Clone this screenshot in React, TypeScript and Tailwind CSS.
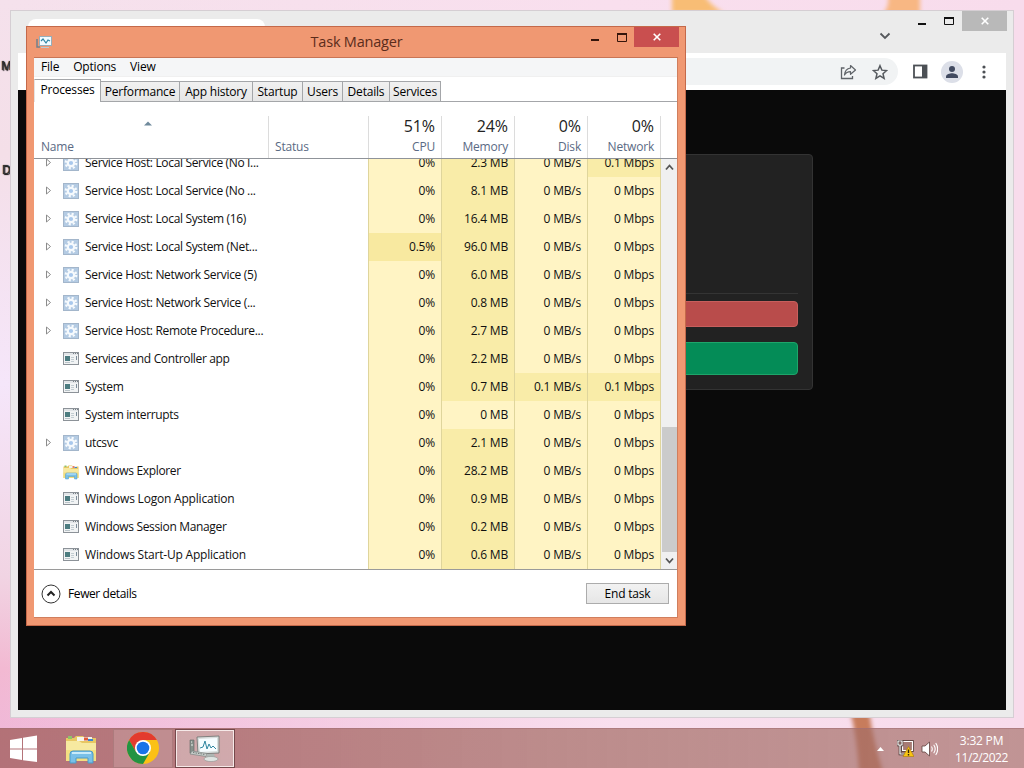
import { ReactNode } from 'react'

type Row = {
  name: string
  icon: 'gear' | 'app' | 'folder'
  expand?: boolean
  wide?: boolean
  cpu?: string
  mem: string
  disk?: string
  net?: string
}

const rows: Row[] = [
  { name: 'Service Host: Local Service (No I...', icon: 'gear', expand: true, mem: '2.3 MB', net: '0.1 Mbps' },
  { name: 'Service Host: Local Service (No ...', icon: 'gear', expand: true, mem: '8.1 MB' },
  { name: 'Service Host: Local System (16)', icon: 'gear', expand: true, mem: '16.4 MB' },
  { name: 'Service Host: Local System (Net...', icon: 'gear', expand: true, cpu: '0.5%', mem: '96.0 MB' },
  { name: 'Service Host: Network Service (5)', icon: 'gear', expand: true, mem: '6.0 MB' },
  { name: 'Service Host: Network Service (...', icon: 'gear', expand: true, mem: '0.8 MB' },
  { name: 'Service Host: Remote Procedure...', icon: 'gear', expand: true, mem: '2.7 MB' },
  { name: 'Services and Controller app', icon: 'app', mem: '2.2 MB' },
  { name: 'System', icon: 'app', mem: '0.7 MB', disk: '0.1 MB/s', net: '0.1 Mbps' },
  { name: 'System interrupts', icon: 'app', mem: '0 MB' },
  { name: 'utcsvc', icon: 'gear', expand: true, mem: '2.1 MB' },
  { name: 'Windows Explorer', icon: 'folder', mem: '28.2 MB' },
  { name: 'Windows Logon Application', icon: 'app', wide: true, mem: '0.9 MB' },
  { name: 'Windows Session Manager', icon: 'app', mem: '0.2 MB' },
  { name: 'Windows Start-Up Application', icon: 'app', wide: true, mem: '0.6 MB' },
]

const tabs = [
  { label: 'Performance', w: 'w-[79px]' },
  { label: 'App history', w: 'w-[73px]' },
  { label: 'Startup', w: 'w-[50px]' },
  { label: 'Users', w: 'w-[40px]' },
  { label: 'Details', w: 'w-[47px]' },
  { label: 'Services', w: 'w-[51px]' },
]

const totals = [
  { value: '51%', label: 'CPU' },
  { value: '24%', label: 'Memory' },
  { value: '0%', label: 'Disk' },
  { value: '0%', label: 'Network' },
]

function GearIcon() {
  return (
    <svg width="16" height="16" viewBox="0 0 16 16">
      <rect width="16" height="16" fill="#b4cbe3" />
      <rect x=".5" y=".5" width="15" height="15" fill="none" stroke="#a3b6cb" />
      <circle cx="8" cy="8" r="5.2" fill="none" stroke="#f6fafd" strokeWidth="2.4" strokeDasharray="2.1 1.98" />
      <circle cx="8" cy="8" r="3.2" fill="#a9c8ec" stroke="#f6fafd" strokeWidth="2.2" />
    </svg>
  )
}

function AppIcon() {
  return (
    <svg width="16" height="13" viewBox="0 0 16 13">
      <rect x=".5" y=".5" width="15" height="12" fill="#f1f3f4" stroke="#8c9298" />
      <path d="M1 2h14" stroke="#d3d8dc" strokeWidth="1" />
      <path d="M10 1.5h1m1 0h1m1 0h1" stroke="#777f86" />
      <rect x="2" y="4" width="5" height="5" fill="#4c7c80" />
      <path d="M8 5.5h3M8 7.5h3M8 9.5h3" stroke="#c3cdd2" />
      <path d="M13.500 4v4" stroke="#7b8c99" />
      <path d="M2 10.500h5" stroke="#b9c3c8" />
    </svg>
  )
}

function FolderIcon({ size }: { size: number }) {
  return (
    <svg width={size} height={size} viewBox="0 0 32 32">
      <path d="M1 5h8l2-2h7l2 2h11v23H1z" fill="#e8c763" />
      <path d="M3 3h4v3H3z" fill="#8fc36a" />
      <path d="M12 4h15v4H12z" fill="#f5f3e8" />
      <path d="M19 4.5h4v3h-4z" fill="#e05a3a" />
      <path d="M23 6h5v2h-5z" fill="#3b87d0" />
      <path d="M1 8h13l3 2h14v18H1z" fill="#f7e9a0" />
      <path d="M1 17h30v11H1z" fill="#f1d873" opacity=".7" />
      <path d="M5 30V21q0-3 3-3h17q3 0 3 3v9h-5v-5H11v5z" fill="#79c0e8" stroke="#4a9bc9" />
      <path d="M7 20h19" stroke="#c8ebfa" strokeWidth="2" />
    </svg>
  )
}

function TaskMgrIcon() {
  return (
    <svg width="16" height="14" viewBox="0 0 16 14">
      <path d="M1 4v8h3" fill="none" stroke="#71808c" strokeWidth="1.5" />
      <rect x="3.5" y="1.5" width="12" height="9" fill="#f2fbff" stroke="#96aebb" />
      <path d="M5 6l2-2 3 4 2-3 2 1" fill="none" stroke="#3187a6" strokeWidth="1.2" />
      <path d="M5 12.5h8" stroke="#bccbd3" />
    </svg>
  )
}

function TaskMgrLarge() {
  return (
    <svg width="32" height="30" viewBox="0 0 32 30">
      <path d="M1 6h4v13H1z" fill="#88918c" stroke="#5f6662" strokeWidth=".6" />
      <path d="M2 8h1M2 11h2" stroke="#e8efe9" />
      <path d="M8 3l22-1v17l-21 1z" fill="#d9dedd" stroke="#69706d" strokeWidth=".8" />
      <path d="M10 5l18-1v13l-17 1z" fill="#f6fdff" />
      <path d="M11 14l3-1 2-6 2 8 2-5 2 4 2-2 3 3" fill="none" stroke="#2f86a0" />
      <path d="M3 17l15 2.500-1 3L1 20z" fill="#c9cfcc" stroke="#7d8582" strokeWidth=".7" />
      <path d="M4 18.500l12 2" stroke="#6f7774" strokeDasharray="1.500 1" />
      <path d="M18 20h7l1 3h-9z" fill="#aeb6b3" />
      <ellipse cx="22" cy="25" rx="7" ry="2.500" fill="#dfe4e2" stroke="#8e9592" strokeWidth=".6" />
    </svg>
  )
}

function ChromeIcon() {
  return (
    <svg width="32" height="32" viewBox="0 0 32 32">
      <circle cx="16" cy="16" r="16" fill="#fbc116" />
      <path d="M16 8h13.86A16 16 0 0 0 2.14 8L9 20z" fill="#e33b2e" />
      <path d="M2.14 8A16 16 0 0 0 16 32l6.93-12L16 16 9.07 20z" fill="#229342" />
      <circle cx="16" cy="16" r="8" fill="#fff" />
      <circle cx="16" cy="16" r="6.3" fill="#1a73e8" />
    </svg>
  )
}

function Heat({ children, shade }: { children: ReactNode; shade: 'low' | 'mid' | 'top' }) {
  const color = shade === 'low' ? 'bg-[#fff4c4]' : shade === 'mid' ? 'bg-[#f9eca8]' : 'bg-[#f8e9a0]'
  return (
    <div className={`${color} flex w-[73px] items-center justify-end border-r border-[#dfd59c] pr-[6px]`}>
      {children}
    </div>
  )
}

function ProcessRow({ row }: { row: Row }) {
  return (
    <div className="flex h-7 shrink-0">
      <div className="flex w-[334px] items-center pl-[11px]">
        <div className="w-[18px]">
          {row.expand && (
            <svg className="mb-px" width="7" height="9" viewBox="0 0 7 9">
              <path d="M1.5 1v7L5.5 4.5z" fill="none" stroke="#8c8c8c" />
            </svg>
          )}
        </div>
        <div className="w-[22px]">
          {row.icon === 'gear' && <GearIcon />}
          {row.icon === 'app' && <div className="pb-[2px]"><AppIcon /></div>}
          {row.icon === 'folder' && <div className="pt-px"><FolderIcon size={16} /></div>}
        </div>
        <span className={`whitespace-pre ${row.wide ? 'tracking-[-0.2px]' : 'tracking-[-0.34px]'}`}>{row.name}</span>
      </div>
      <div className="w-px bg-[#dfd59c]" />
      <Heat shade={row.cpu ? 'top' : 'low'}>{row.cpu ?? '0%'}</Heat>
      <Heat shade={row.mem === '0 MB' ? 'low' : 'mid'}>{row.mem}</Heat>
      <Heat shade={row.disk ? 'mid' : 'low'}>{row.disk ?? '0 MB/s'}</Heat>
      <Heat shade={row.net ? 'mid' : 'low'}>{row.net ?? '0 Mbps'}</Heat>
    </div>
  )
}

function Chevron({ up }: { up?: boolean }) {
  return (
    <svg width="9" height="7" viewBox="0 0 9 7">
      <path d={up ? 'M1 5.5l3.5-4 3.5 4' : 'M1 1.5l3.5 4 3.5-4'} fill="none" stroke="#555" strokeWidth="1.8" />
    </svg>
  )
}

function TaskManager() {
  return (
    <div className="absolute left-[26px] top-[26px] flex h-[600px] w-[660px] flex-col border border-[#c4694a] bg-[#f09872] px-[7px] pb-[7px]">
      <div className="flex h-[30px] shrink-0">
        <div className="flex w-[100px] pl-[2px] pt-[8px]">
          <TaskMgrIcon />
        </div>
        <div className="flex-1 pl-[48px] text-center text-[14.5px] leading-[29px] tracking-[-0.2px] text-[#5b2c1b]">Task Manager</div>
        <div className="mr-[-1px] flex w-[148px] justify-end">
          <svg className="mr-[-7px]" width="60" height="20" viewBox="0 0 60 20">
            <path d="M10 13h8" stroke="#35150b" strokeWidth="2" />
            <path d="M36.500 6.500h9v8h-9z" fill="none" stroke="#35150b" />
            <path d="M36 7h10" stroke="#35150b" strokeWidth="2" />
          </svg>
          <div className="flex h-5 w-[45px] items-center justify-center bg-[#c94f4f]">
            <svg width="8" height="8" viewBox="0 0 8 8">
              <path d="M.7.7l6.6 6.6M7.3.7L.7 7.3" stroke="#fff" strokeWidth="1.6" />
            </svg>
          </div>
        </div>
      </div>

      <div className="flex min-h-0 flex-1 flex-col border border-l-0 border-[#d07e5d] border-t-[#c97555] bg-white">
        <div className="flex h-[19px] shrink-0 gap-[14px] border-b border-[#f0f0f0] bg-[#f5f6f7] pl-[7px] leading-[17px]">
          <span>File</span>
          <span>Options</span>
          <span>View</span>
        </div>

        <div className="flex h-[25px] shrink-0 items-end border-b border-[#a4a6a9] pt-[3px]">
          <div className="mb-[-1px] h-[23px] w-[67px] border border-b-0 border-[#a4a6a9] border-l-[#e4e4e4] bg-white text-center leading-[20px]">Processes</div>
          {tabs.map((t) => (
            <div key={t.label} className={`${t.w} h-[20px] border border-b-0 border-l-0 border-[#a4a6a9] bg-linear-to-b from-[#f1f1f1] to-[#e6e6e6] text-center leading-[20px]`}>
              {t.label}
            </div>
          ))}
        </div>

        <div className="flex h-[57px] shrink-0 border-b border-[#8f9399] pt-[14px] text-[#5a6a84]">
          <div className="flex w-[235px] flex-col border-r border-[#dcdcdc] pl-[7px]">
            <svg className="ml-[103px] mt-[5px]" width="8" height="5" viewBox="0 0 8 5">
              <path d="M0 4.5L4 .5l4 4z" fill="#6f8a9c" />
            </svg>
            <span className="mt-[13px] leading-4">Name</span>
          </div>
          <div className="flex w-[100px] items-end border-r border-[#dcdcdc] pb-[3px] pl-[6px] leading-4">Status</div>
          {totals.map((t) => (
            <div key={t.label} className="flex w-[73px] flex-col items-end border-r border-[#dcdcdc] pr-[6px]">
              <span className="text-[16px] leading-[21px] tracking-[-0.1px] text-[#222]">{t.value}</span>
              <span className="mt-[2px] leading-4">{t.label}</span>
            </div>
          ))}
        </div>

        <div className="flex h-[410px] shrink-0 overflow-hidden">
          <div className="mt-[-10px] flex flex-col text-[#101010]">
            {rows.map((row, i) => (
              <ProcessRow key={i} row={row} />
            ))}
          </div>
          <div className="flex flex-1 flex-col items-center bg-[#f0f0f0]">
            <div className="flex h-[17px] items-center">
              <Chevron up />
            </div>
            <div className="flex-1" />
            <div className="h-[125px] w-[15px] bg-[#cbcbcb]" />
            <div className="flex h-[17px] items-center">
              <Chevron />
            </div>
          </div>
        </div>

        <div className="flex flex-1 items-center border-t border-[#9a9a9a] pl-[7px] pr-[8px]">
          <svg width="20" height="20" viewBox="0 0 20 20">
            <circle cx="10" cy="10" r="9" fill="#fff" stroke="#333" />
            <path d="M6.5 11.5L10 8l3.5 3.5" fill="none" stroke="#222" strokeWidth="2" />
          </svg>
          <span className="ml-[7px] flex-1 tracking-[-0.4px]">Fewer details</span>
          <button className="h-[21px] w-[83px] border border-[#acacac] bg-linear-to-b from-[#f2f2f2] to-[#e6e6e6] leading-[19px]">End task</button>
        </div>
      </div>
    </div>
  )
}

function Browser() {
  return (
    <div className="absolute left-[10px] top-[10px] flex h-[708px] w-[1004px] flex-col border border-[#d5ced3] bg-[#ebebeb] px-[7px] pb-[7px]">
      <div className="flex h-[42px] shrink-0 justify-between">
        <div className="mt-2 ml-[10px] h-[34px] w-[237px] rounded-t-lg bg-white" />
        <div className="flex">
          <svg className="mt-[21px] mr-[19px]" width="12" height="8" viewBox="0 0 12 8">
            <path d="M1.5 1.5L6 6l4.500-4.500" fill="none" stroke="#55585c" strokeWidth="1.8" />
          </svg>
          <svg width="52" height="20" viewBox="0 0 52 20">
            <path d="M8 13h8" stroke="#111" strokeWidth="2" />
            <path d="M34.500 6.500h9v7h-9z" fill="none" stroke="#111" />
            <path d="M34 7h10" stroke="#111" strokeWidth="2" />
          </svg>
          <div className="mr-[-1px] flex h-5 w-[45px] items-center justify-center bg-[#b9b9b9]">
            <svg width="8" height="8" viewBox="0 0 8 8">
              <path d="M.7.7l6.600 6.600M7.300.7L.7 7.300" stroke="#fff" strokeWidth="1.600" />
            </svg>
          </div>
        </div>
      </div>

      <div className="flex h-[37px] shrink-0 items-center bg-white pr-[18px]">
        <div className="ml-[100px] flex h-[27px] flex-1 items-center justify-end gap-[15px] rounded-full bg-[#f1f3f4] pr-[10px]">
          <svg width="17" height="16" viewBox="0 0 17 16">
            <path d="M4.500 4H1.500v10.500h11V12" fill="none" stroke="#5f6368" strokeWidth="1.300" />
            <path d="M10.500 1.500L15.500 6l-5 4.300V7.700C7.500 7.700 5.800 8.700 4.500 11c.3-3.800 2.500-6.500 6-7z" fill="none" stroke="#5f6368" strokeWidth="1.200" strokeLinejoin="round" />
          </svg>
          <svg width="16" height="16" viewBox="0 0 24 24">
            <path d="M12 2.500l2.800 6.700 7.200.6-5.500 4.800 1.700 7.100-6.200-3.800-6.200 3.800 1.700-7.100L2 9.800l7.200-.6z" fill="none" stroke="#55595e" strokeWidth="2.200" />
          </svg>
        </div>
        <svg className="ml-[15px]" width="15" height="15" viewBox="0 0 15 15">
          <rect x="1" y="1.500" width="12.500" height="12" fill="#fff" stroke="#4c5055" strokeWidth="1.800" />
          <path d="M9 1h5v13H9z" fill="#4c5055" />
        </svg>
        <div className="ml-[13px] flex size-[22px] items-center justify-center rounded-full bg-[#dcdfe8]">
          <svg width="14" height="14" viewBox="0 0 14 14">
            <circle cx="7" cy="4" r="3" fill="#414a60" />
            <path d="M1 13v-1.500C1 9.300 5 8.300 7 8.300s6 1 6 3.200V13z" fill="#414a60" />
          </svg>
        </div>
        <svg className="ml-[17px]" width="8" height="14" viewBox="0 0 8 14">
          <circle cx="4" cy="2" r="1.600" fill="#4c5055" />
          <circle cx="4" cy="7" r="1.600" fill="#4c5055" />
          <circle cx="4" cy="12" r="1.600" fill="#4c5055" />
        </svg>
      </div>

      <div className="flex flex-1 justify-end bg-[#0a0a0a] pr-[193px] pt-[64px]">
        <div className="h-[236px] w-[420px] rounded-[4px] border border-[#333] bg-[#222] px-[14px] pt-[138px]">
          <div className="border-t border-[#343434]" />
          <div className="mt-[7px] h-[26px] rounded-[4px] border border-[#c85f5d] bg-[#b94c4b]" />
          <div className="mt-[15px] h-[33px] rounded-[4px] border border-[#1ea56a] bg-[#048c57]" />
        </div>
      </div>
    </div>
  )
}

function Wallpaper() {
  return (
    <svg className="absolute inset-0" width="1024" height="768" viewBox="0 0 1024 768">
      <defs>
        <linearGradient id="pink" x1="0" y1="0" x2="0" y2="1">
          <stop offset="0" stopColor="#f5e1ec" />
          <stop offset=".2" stopColor="#f4dfe8" />
          <stop offset=".5" stopColor="#f5e6fa" />
          <stop offset=".75" stopColor="#f1d4e3" />
          <stop offset=".87" stopColor="#f2b9d2" />
          <stop offset="1" stopColor="#efb8dc" />
        </linearGradient>
        <linearGradient id="fade" x1="0" y1="0" x2="1" y2="0">
          <stop offset="0" stopColor="#f9dfee" stopOpacity="0" />
          <stop offset=".6" stopColor="#f9dfee" />
          <stop offset="1" stopColor="#f8dcec" />
        </linearGradient>
        <filter id="soft">
          <feGaussianBlur stdDeviation="2" />
        </filter>
      </defs>
      <rect width="1024" height="768" fill="url(#pink)" />
      <rect width="1024" height="768" fill="url(#fade)" />
      <g filter="url(#soft)">
        <path d="M672-5h32q6 10 20 18h-52z" fill="#f8bd74" />
        <path d="M888-5h32v20h-38q8-8 6-20z" fill="#f8b783" />
        <path d="M850 710h19q4 30 14 62h-24q-2-34-9-62z" fill="#c77c5c" />
      </g>
    </svg>
  )
}

function Taskbar() {
  return (
    <div className="absolute inset-x-0 bottom-0 flex h-10 items-center border-t border-[#a36f75]/60 bg-linear-to-r from-[#a4605f]/80 via-[#a8706a]/75 to-[#a26d66]/65 text-white">
      <div className="flex w-[50px] pl-[10px]">
        <svg width="28" height="28" viewBox="0 0 28 28">
          <path d="M0 5l12-2v10.500H0zM13 2.800L27 .5v13H13zM0 14.500h12V25L0 23zM13 14.500h14v12.500L13 25.200z" fill="#fff" />
        </svg>
      </div>
      <div className="flex w-[63px] pl-[15px]">
        <FolderIcon size={32} />
      </div>
      <div className="flex h-[39px] w-[60px] items-center justify-center border border-[#d9b5b4] bg-white/15 pb-px outline-1 -outline-offset-1 outline-[#8d5558]/60">
        <ChromeIcon />
      </div>
      <div className="ml-[2px] flex h-[39px] w-[60px] items-center justify-center border border-[#75484b] bg-white/35 pt-px shadow-[inset_0_0_0_1px_#f6e9e8]">
        <TaskMgrLarge />
      </div>
      <div className="flex flex-1 items-center justify-end">
        <svg width="7" height="5" viewBox="0 0 7 5">
          <path d="M0 5l3.500-4L7 5z" fill="#fff" />
        </svg>
        <svg className="ml-[13px]" width="17" height="17" viewBox="0 0 17 17">
          <path d="M5.500 1.500h10v9h-10z" fill="#9b6f69" stroke="#43302c" strokeWidth="2.600" />
          <path d="M5.500 1.500h10v9h-10z" fill="#a67b74" stroke="#fff" strokeWidth="1.200" />
          <path d="M1 1h4v4H1zM3 5v9h5" fill="none" stroke="#43302c" strokeWidth="2.600" />
          <path d="M1 1h4v4H1zM3 5v9h5" fill="none" stroke="#fff" strokeWidth="1.200" />
          <path d="M11.500 6.500L17 16.500H6z" fill="#f9c513" stroke="#a97b08" strokeWidth=".6" />
          <path d="M11.500 9.500v3.500m0 1v1.500" stroke="#33260a" strokeWidth="1.400" />
        </svg>
        <svg className="ml-[7px]" width="17" height="16" viewBox="0 0 17 16">
          <path d="M1 5h3l4.500-4v14L4 11H1z" fill="#fff" stroke="#5d3f3b" strokeWidth=".8" />
          <path d="M10.500 5.500q1.500 2.500 0 5M12.700 3.700q3 4.300 0 8.600M14.700 2q4 6 0 12" fill="none" stroke="#fff" strokeWidth="1.100" />
        </svg>
      </div>
      <div className="ml-[4px] flex w-[82px] flex-col items-center pt-px pr-[8px] text-[12px] leading-[17px]">
        <span className="-mr-[5px]">3:32 PM</span>
        <span className="-mr-[5px] tracking-[-0.45px]">11/2/2022</span>
      </div>
    </div>
  )
}

export default function App() {
  return (
    <div className="relative h-[768px] w-[1024px] overflow-hidden font-['Open_Sans','Noto_Sans',sans-serif] text-[12px] tracking-[-0.2px] text-black">
      <Wallpaper />
      <span className="absolute left-px top-[58px] text-[12px] leading-4 text-[#333] [text-shadow:0_0_1px_#000,1px_1px_1px_#000]">M</span>
      <span className="absolute left-[2px] top-[162px] text-[12px] leading-4 text-[#333] [text-shadow:0_0_1px_#000,1px_1px_1px_#000]">D</span>
      <Browser />
      <TaskManager />
      <Taskbar />
    </div>
  )
}
